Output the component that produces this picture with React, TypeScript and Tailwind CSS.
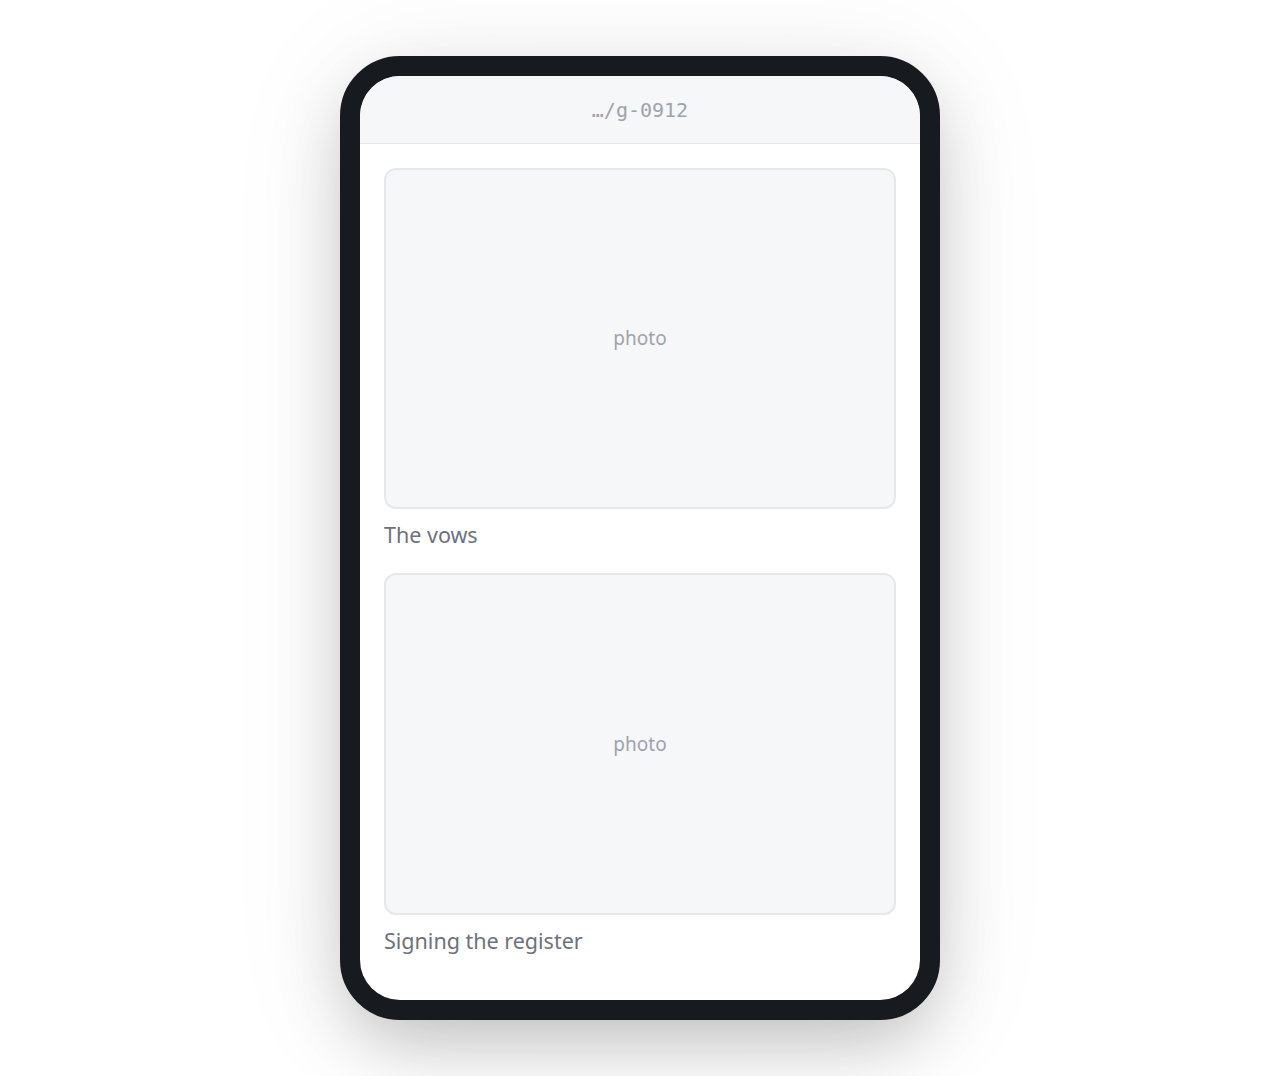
const shots = [
  { id: 'vows', caption: 'The vows' },
  { id: 'register', caption: 'Signing the register' },
];

// A photo slot: placeholder box at 3:2 with its caption underneath.
function Shot({ caption }: { caption: string }) {
  return (
    <figure>
      <div className="flex aspect-[3/2] w-full items-center justify-center rounded-xl border-2 border-[#e6e8eb] bg-[#f6f7f9]">
        <span className="text-[19px] text-[#9ca3af]">photo</span>
      </div>
      <figcaption className="mt-3 text-[21.5px] leading-7 text-[#6b7280]">{caption}</figcaption>
    </figure>
  );
}

export default function App() {
  return (
    <div className="flex min-h-[1076px] items-center justify-center bg-white" style={{ fontFamily: '"Noto Sans", "Open Sans", sans-serif' }}>
      {/* device shell */}
      <div className="h-[964px] w-[600px] rounded-[60px] border-[20px] border-[#171a1f] bg-[#171a1f] shadow-[0_30px_70px_-10px_rgba(0,0,0,0.22),0_10px_120px_rgba(0,0,0,0.08)]">
        <div className="flex h-full flex-col overflow-hidden rounded-[40px] bg-white">
          <header className="flex h-[68px] flex-none items-center justify-center border-b border-[#e5e7eb] bg-[#f6f7f9]">
            <span className="text-[20px] text-[#9ca3af]" style={{ fontFamily: '"DejaVu Sans Mono", "Liberation Mono", monospace' }}>
              …/g-0912
            </span>
          </header>
          <main className="flex flex-col gap-6 p-6">
            {shots.map((s) => (
              <Shot key={s.id} caption={s.caption} />
            ))}
          </main>
        </div>
      </div>
    </div>
  );
}
